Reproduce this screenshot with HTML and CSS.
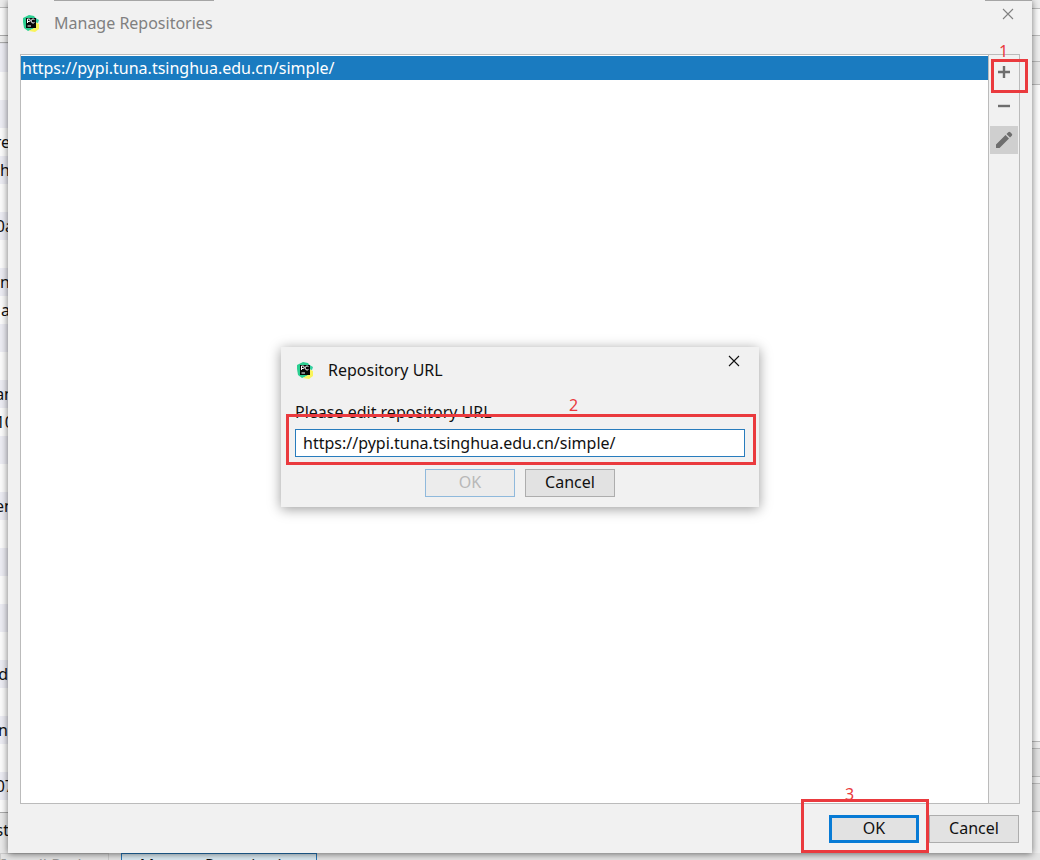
FILE: index.html
```
<!DOCTYPE html>
<html lang="en">
<head>
<meta charset="utf-8">
<title>Manage Repositories</title>
<link rel="stylesheet" href="styles.css">
</head>
<body>
<svg class="symbols" aria-hidden="true">
  <symbol id="pycharm" viewBox="0 0 18 18">
    <path d="M1 4 7 1l5 1 2 3-1 9-7 3-4-3-1-6z" fill="#2bcf91"/>
    <path d="m12 3 5 3-1 3-4-1z" fill="#35cfa0"/>
    <path d="m13 8 4 2v5l-4 3-6-1 5-3z" fill="#f9f45a"/>
    <path d="M4 4h10v10H4z" fill="#080808"/>
    <path d="M5.500 9V5h1.500a1.200 1.200 0 0 1 0 2.500H5.500M12.500 5.600a2 2 0 1 0 0 2.800M5.500 12h3.500" fill="none" stroke="#fff" stroke-width="1"/>
  </symbol>
  <symbol id="close" viewBox="0 0 12 12"><path d="m1 1 10 10M11 1 1 11" fill="none" stroke="currentColor" stroke-width="1.100"/></symbol>
</svg>
<div class="desktop">
  <div class="behind-left">
    <div class="strip-top"></div>
    <div class="strip-search"></div>
    <div class="packages">
      <div class="package"></div><div class="package"></div><div class="package"></div>
      <div class="package package-wide">re</div>
      <div class="package package-wide">ch</div>
      <div class="package"></div>
      <div class="package package-long">0a</div>
      <div class="package"></div>
      <div class="package package-wide">n</div>
      <div class="package package-wide">a</div>
      <div class="package"></div><div class="package"></div>
      <div class="package package-long">an</div>
      <div class="package package-long">10</div>
      <div class="package"></div><div class="package"></div>
      <div class="package package-long">en</div>
      <div class="package"></div><div class="package"></div><div class="package"></div><div class="package"></div><div class="package"></div>
      <div class="package">d</div>
      <div class="package"></div>
      <div class="package">n</div>
      <div class="package"></div>
      <div class="package package-long">07</div>
    </div>
    <div class="strip-bottom">st</div>
  </div>
  <div class="behind-right">
    <div class="edge edge-a"></div><div class="edge edge-b"></div><div class="edge edge-c"></div><div class="edge edge-d"></div>
    <div class="edge edge-main"></div>
    <div class="edge edge-e"></div><div class="edge edge-f"></div><div class="edge edge-e"></div><div class="edge edge-f"></div><div class="edge edge-g"></div>
  </div>
  <div class="behind-bottom">
    <button class="back-button back-install" disabled>Install Package</button>
    <button class="back-button back-manage">Manage Repositories</button>
  </div>

  <main class="window">
    <header class="titlebar">
      <svg class="logo"><use href="#pycharm"/></svg>
      <h1 class="title">Manage Repositories</h1>
      <button class="close" aria-label="Close"><svg class="close-icon"><use href="#close"/></svg></button>
    </header>
    <section class="content">
      <ul class="list"><li class="list-item">https://pypi.tuna.tsinghua.edu.cn/simple/</li></ul>
      <div class="toolbar">
        <div class="callout-anchor">
          <button class="tool" aria-label="Add"><svg class="tool-icon" viewBox="0 0 16 16"><path d="M8 2v12M2 8h12" stroke="#6e6e6e" stroke-width="2.400"/></svg></button>
          <span class="callout callout-add"><span class="callout-number">1</span></span>
        </div>
        <button class="tool" aria-label="Remove"><svg class="tool-icon" viewBox="0 0 16 16"><path d="M2 8h12" stroke="#6e6e6e" stroke-width="2.400"/></svg></button>
        <button class="tool tool-active" aria-label="Edit"><svg class="pencil" viewBox="0 0 18 18"><path d="M1 13.500 10.500 4 14 7.500 4.500 17H1zM11.500 3l1.800-1.800q1-1 2 0l1.500 1.500q1 1 0 2L15 6.500z" fill="#6e6e6e"/></svg></button>
      </div>
    </section>
    <footer class="footer">
      <div class="callout-anchor">
        <button class="button button-default">OK</button>
        <span class="callout callout-ok"><span class="callout-number">3</span></span>
      </div>
      <button class="button">Cancel</button>
    </footer>
  </main>

  <form class="dialog" role="dialog" aria-labelledby="dialog-title">
    <header class="dialog-titlebar">
      <svg class="logo"><use href="#pycharm"/></svg>
      <h2 class="title" id="dialog-title">Repository URL</h2>
      <button type="button" class="close" aria-label="Close"><svg class="close-icon"><use href="#close"/></svg></button>
    </header>
    <div class="dialog-body">
      <label class="label" for="url">Please edit repository URL</label>
      <div class="callout-anchor">
        <input class="field" id="url" type="text" value="https://pypi.tuna.tsinghua.edu.cn/simple/">
        <span class="callout callout-url"><span class="callout-number">2</span></span>
      </div>
      <div class="dialog-actions">
        <button type="button" class="button" disabled>OK</button>
        <button type="button" class="button">Cancel</button>
      </div>
    </div>
  </form>
</div>
</body>
</html>
```
FILE: styles.css
```
* { box-sizing: border-box; }
body { margin: 0; }
body, button, input { font: 16px/24px "Noto Sans", "Open Sans", sans-serif; color: #111; }
button { padding: 0; border: 0; background: none; }
.symbols { position: absolute; width: 0; height: 0; }
.desktop { position: relative; height: 100vh; overflow: hidden; background: #e9e9e9; }

/* Window underneath */
.behind-left { position: absolute; inset: 0 auto 0 0; width: 8px; overflow: hidden; display: flex; flex-direction: column; }
.strip-top { height: 8px; flex: none; background: #ececec; border-bottom: 1px solid #bbb; }
.strip-search { height: 36px; flex: none; background: linear-gradient(#fafafa 27px, #aaa 27px, #aaa 28px, #eee 28px, #eee 34px, #aaa 34px, #aaa 35px, #e4e4ea 35px); }
.packages { flex: none; border-bottom: 1px solid #aaa; padding-bottom: 12px; background: #fbfbfb; }
.package { height: 28px; line-height: 28px; display: flex; justify-content: flex-end; background: #fbfbfb; }
.package:nth-child(odd) { background: #ececf3; }
.package-wide { width: 10px; }
.package-long { width: 14px; }
.strip-bottom { display: flex; justify-content: flex-end; width: 9px; padding-top: 5px; }
.behind-right { position: absolute; inset: 0 0 0 auto; width: 8px; display: flex; flex-direction: column; background: #eee; }
.edge { border-bottom: 1px solid #bbb; flex: none; }
.edge-a { height: 9px; }
.edge-b { height: 27px; background: #fafafa; }
.edge-c { height: 26px; }
.edge-d { height: 23px; background: #e8e8e8; }
.edge-main { flex: 1; background: #fbfbfb; }
.edge-e { height: 7px; }
.edge-f { height: 28px; background: #e3e3e3; }
.edge-g { height: 48px; border: 0; }
.behind-bottom { position: absolute; inset: auto 0 0 0; height: 7px; overflow: hidden; display: flex; align-items: flex-start; gap: 12px; background: #e4e4e4; }
.back-button { height: 28px; flex: none; padding-bottom: 4px; border: 1px solid #ccc; line-height: 18px; white-space: nowrap; }
.back-install { width: 109px; color: #999; }
.back-manage { width: 196px; border: 1px solid #2677b8; background: #d9e9f2; }

/* Repositories window */
.window { position: absolute; inset: 0 8px 7px; display: flex; flex-direction: column; background: #f1f1f1; box-shadow: 0 1px 7px rgba(0, 0, 0, .55); }
.window::before { content: ""; position: absolute; top: 0; left: 46px; width: 160px; height: 1px; background: #a5a5a5; }
.window::after { content: ""; position: absolute; top: 0; right: 0; width: 47px; height: 1px; background: #a5a5a5; }
.titlebar, .dialog-titlebar { display: flex; align-items: flex-start; }
.titlebar { height: 54px; flex: none; padding: 0 18px 0 14px; color: #808080; }
.logo { width: 18px; height: 18px; flex: none; margin-top: 14px; }
.title { margin: 11px auto 0 14px; font-size: 16px; line-height: 24px; font-weight: 400; color: inherit; }
.close { width: 12px; height: 12px; margin-top: 8px; color: inherit; }
.close-icon { display: block; width: 12px; height: 12px; }
.content { flex: 1; display: flex; margin: 0 12px; border: 1px solid #bbb; min-height: 0; }
.list { flex: 1; margin: 0; padding: 1px 0 0; list-style: none; background: #fff; }
.list-item { padding-left: 1px; color: #fff; background: #1a7bc0; }
.toolbar { width: 31px; padding: 3px 1px; border-left: 1px solid #bbb; display: flex; flex-direction: column; gap: 6px; }
.tool { width: 28px; height: 28px; display: flex; align-items: center; justify-content: center; }
.tool-active { background: #cfcfcf; }
.tool-icon { width: 16px; height: 16px; }
.pencil { width: 18px; height: 18px; }
.footer { display: flex; justify-content: flex-end; gap: 10px; padding: 11px 13px 10px; }
.button { display: block; width: 90px; height: 28px; padding-bottom: 2px; border: 1px solid #adadad; background: #e2e2e2; }
.button:disabled { border-color: #8fb9dc; background: #ececec; color: #b8b8b8; }
.button-default { border: 3px solid #087bd5; line-height: 20px; }

/* URL prompt */
.dialog { position: absolute; top: 50%; left: 50%; width: 478px; transform: translate(-50%, -50%); margin-top: -3px; background: #f1f1f1; box-shadow: 0 2px 12px rgba(0, 0, 0, .4); }
.dialog-titlebar { padding: 0 19px 0 15px; }
.dialog-body { padding: 18px 14px 10px; }
.label { display: block; line-height: 24px; }
.field { display: block; width: 100%; height: 28px; margin-top: 5px; padding: 0 7px; border: 1px solid #287cbd; border-radius: 0; background: #fff; outline: 0; }
.dialog-actions { display: flex; justify-content: center; gap: 10px; margin-top: 12px; }

/* Numbered callouts */
.callout-anchor { position: relative; }
.callout { position: absolute; border: 3px solid #ea3a3e; pointer-events: none; color: #ea3a3e; }
.callout-number { position: absolute; bottom: 100%; line-height: 18px; }
.callout-add { inset: 1px -10px -7px 1px; }
.callout-add .callout-number { left: 5px; bottom: 30px; }
.callout-url { inset: -15px -11px -8px -9px; }
.callout-url .callout-number { left: 280px; bottom: 48px; }
.callout-ok { inset: -16px -10px -10px -28px; }
.callout-ok .callout-number { left: 41px; bottom: 47px; }
```
